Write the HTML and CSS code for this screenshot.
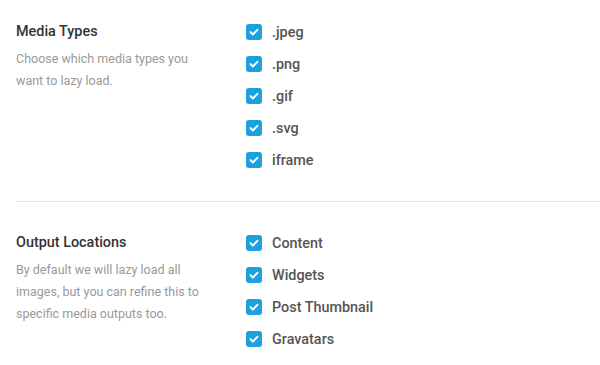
FILE: index.html
```html
<!DOCTYPE html>
<html lang="en">
<head>
    <meta charset="UTF-8">
    <meta name="viewport" content="width=device-width, initial-scale=1.0">
    <title>Lazy Load Settings</title>
    <link rel="stylesheet" href="styles.css">
</head>
<body>
    <div class="settings">
        <div class="section">
            <div class="info">
                <h3>Media Types</h3>
                <p>Choose which media types you want to lazy load.</p>
            </div>
            <div class="options">
                <label class="option"><span class="box"><svg viewBox="0 0 16 16"><path d="M4.6 8.3l2.3 2.2 4.5-4.6" /></svg></span>.jpeg</label>
                <label class="option"><span class="box"><svg viewBox="0 0 16 16"><path d="M4.6 8.3l2.3 2.2 4.5-4.6" /></svg></span>.png</label>
                <label class="option"><span class="box"><svg viewBox="0 0 16 16"><path d="M4.6 8.3l2.3 2.2 4.5-4.6" /></svg></span>.gif</label>
                <label class="option"><span class="box"><svg viewBox="0 0 16 16"><path d="M4.6 8.3l2.3 2.2 4.5-4.6" /></svg></span>.svg</label>
                <label class="option"><span class="box"><svg viewBox="0 0 16 16"><path d="M4.6 8.3l2.3 2.2 4.5-4.6" /></svg></span>iframe</label>
            </div>
        </div>
        <div class="section">
            <div class="info">
                <h3>Output Locations</h3>
                <p>By default we will lazy load all images, but you can refine this to specific media outputs too.</p>
            </div>
            <div class="options">
                <label class="option"><span class="box"><svg viewBox="0 0 16 16"><path d="M4.6 8.3l2.3 2.2 4.5-4.6" /></svg></span>Content</label>
                <label class="option"><span class="box"><svg viewBox="0 0 16 16"><path d="M4.6 8.3l2.3 2.2 4.5-4.6" /></svg></span>Widgets</label>
                <label class="option"><span class="box"><svg viewBox="0 0 16 16"><path d="M4.6 8.3l2.3 2.2 4.5-4.6" /></svg></span>Post Thumbnail</label>
                <label class="option"><span class="box"><svg viewBox="0 0 16 16"><path d="M4.6 8.3l2.3 2.2 4.5-4.6" /></svg></span>Gravatars</label>
            </div>
        </div>
    </div>
</body>
</html>
```

FILE: styles.css
```css
body { margin: 0; background: #fff; font-family: Roboto, "Liberation Sans", sans-serif; }
.settings { margin-left: 16px; }
.section { display: flex; padding: 16px 0 25px; }
.section + .section { border-top: 1px solid #e6e6e6; padding-top: 25px; }
.info { width: 230px; flex: none; }
.info h3 { margin: 0; font-size: 14.4px; font-weight: 500; line-height: 32px; color: #333; }
.info p { margin: 0; width: 185px; font-size: 12.5px; line-height: 22px; color: #999; }
.options { display: flex; flex-direction: column; }
.option { display: flex; align-items: center; gap: 10px; height: 32px; font-size: 14.4px; font-weight: 500; color: #555; }
.box { width: 16px; height: 16px; border-radius: 3px; background: #1da1de; display: flex; }
.box svg { width: 16px; height: 16px; fill: none; stroke: #fff; stroke-width: 2; stroke-linecap: round; stroke-linejoin: round; }
```
